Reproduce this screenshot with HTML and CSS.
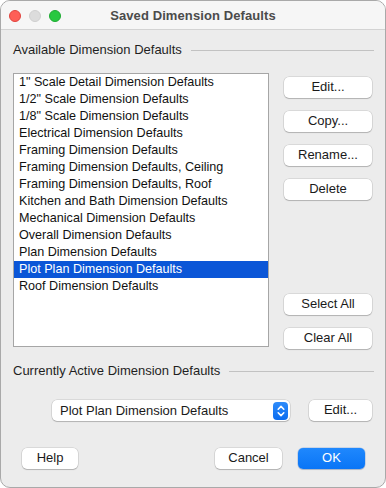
FILE: index.html
```html
<!DOCTYPE html>
<html>
<head>
<meta charset="utf-8">
<link rel="stylesheet" href="styles.css">
</head>
<body>
<div class="window">
  <div class="titlebar">
    <div class="lights">
      <span class="light red"></span>
      <span class="light gray"></span>
      <span class="light green"></span>
    </div>
    <div class="title">Saved Dimension Defaults</div>
    <div></div>
  </div>
  <div class="content">
    <div class="group-head first"><span>Available Dimension Defaults</span><div class="rule"></div></div>
    <div class="main">
      <div class="list">
        <div class="row">1" Scale Detail Dimension Defaults</div>
        <div class="row">1/2" Scale Dimension Defaults</div>
        <div class="row">1/8" Scale Dimension Defaults</div>
        <div class="row">Electrical Dimension Defaults</div>
        <div class="row">Framing Dimension Defaults</div>
        <div class="row">Framing Dimension Defaults, Ceiling</div>
        <div class="row">Framing Dimension Defaults, Roof</div>
        <div class="row">Kitchen and Bath Dimension Defaults</div>
        <div class="row">Mechanical Dimension Defaults</div>
        <div class="row">Overall Dimension Defaults</div>
        <div class="row">Plan Dimension Defaults</div>
        <div class="row selected">Plot Plan Dimension Defaults</div>
        <div class="row">Roof Dimension Defaults</div>
      </div>
      <div class="side">
        <div class="btn-group">
          <div class="btn">Edit...</div>
          <div class="btn">Copy...</div>
          <div class="btn">Rename...</div>
          <div class="btn">Delete</div>
        </div>
        <div class="btn-group bottom">
          <div class="btn">Select All</div>
          <div class="btn">Clear All</div>
        </div>
      </div>
    </div>
    <div class="group-head second"><span>Currently Active Dimension Defaults</span><div class="rule"></div></div>
    <div class="active-row">
      <div class="popup">
        <span>Plot Plan Dimension Defaults</span>
        <span class="stepper">
          <svg width="14" height="18" viewBox="0 0 14 18"><path d="M4.2 7.2 L7 4.4 L9.8 7.2 M4.2 10.8 L7 13.6 L9.8 10.8" fill="none" stroke="#fff" stroke-width="1.6" stroke-linecap="round" stroke-linejoin="round"/></svg>
        </span>
      </div>
      <div class="btn edit2">Edit...</div>
    </div>
    <div class="footer">
      <div class="btn help">Help</div>
      <div class="spacer"></div>
      <div class="btn cancel">Cancel</div>
      <div class="btn ok">OK</div>
    </div>
  </div>
</div>
</body>
</html>
```

FILE: styles.css
```css
* { box-sizing: border-box; }
html, body { margin: 0; padding: 0; background: #ffffff; }
body {
  font-family: "Liberation Sans", Arial, sans-serif;
  font-size: 13px;
  color: #1d1d1d;
}
.window {
  width: 386px;
  height: 488px;
  border: 1px solid #a9a9a9;
  border-radius: 10px;
  overflow: hidden;
  background: #ececec;
  display: flex;
  flex-direction: column;
}
.titlebar {
  height: 29px;
  flex: none;
  background: #f6f6f6;
  border-bottom: 1px solid #d3d3d3;
  display: grid;
  grid-template-columns: 1fr auto 1fr;
  align-items: center;
}
.lights {
  display: flex;
  gap: 8px;
  padding-left: 8px;
  padding-top: 1px;
}
.light {
  width: 12px;
  height: 12px;
  border-radius: 50%;
  display: block;
}
.red { background: #fe5f57; border: 0.5px solid #e0443e; }
.gray { background: #dcdcdc; border: 0.5px solid #cfcfcf; }
.green { background: #28c840; border: 0.5px solid #1eaa32; }
.title {
  font-weight: bold;
  font-size: 13px;
  color: #4b4b4b;
  letter-spacing: 0.1px;
  padding-top: 1px;
}
.content {
  flex: 1;
  display: flex;
  flex-direction: column;
  padding: 0 11px 0 12px;
}
.group-head {
  display: flex;
  align-items: center;
  gap: 9px;
  height: 16px;
  line-height: 16px;
  color: #1f1f1f;
}
.group-head.first { margin-top: 12px; }
.group-head.second { margin-top: 16px; }
.rule {
  flex: 1;
  height: 1px;
  background: #c2c2c2;
}
.main {
  display: flex;
  margin-top: 15px;
  height: 274px;
}
.list {
  width: 256px;
  height: 274px;
  background: #ffffff;
  border: 1px solid #a6a6a6;
}
.row {
  height: 17px;
  line-height: 17px;
  padding-left: 5px;
  font-size: 12.6px;
  color: #111;
  white-space: nowrap;
}
.row.selected {
  background: #0b56d7;
  color: #ffffff;
}
.side {
  margin-left: 15px;
  width: 88px;
  display: flex;
  flex-direction: column;
  justify-content: space-between;
  padding-top: 4px;
}
.btn-group {
  display: flex;
  flex-direction: column;
  gap: 13px;
}
.btn-group.bottom { margin-bottom: -2px; }
.btn {
  height: 21px;
  line-height: 20px;
  background: #ffffff;
  border-radius: 5px;
  text-align: center;
  color: #1a1a1a;
  box-shadow: 0 0 0 0.5px rgba(0,0,0,0.16), 0 1px 1px rgba(0,0,0,0.18);
  white-space: nowrap;
}
.active-row {
  display: flex;
  align-items: center;
  margin-top: 21px;
  padding-left: 39px;
  height: 21px;
}
.popup {
  width: 238px;
  height: 21px;
  background: #ffffff;
  border-radius: 5px;
  box-shadow: 0 0 0 0.5px rgba(0,0,0,0.16), 0 1px 1px rgba(0,0,0,0.18);
  display: flex;
  align-items: center;
  justify-content: space-between;
  padding: 0 2px 0 8px;
  color: #1a1a1a;
}
.stepper {
  width: 15px;
  height: 18px;
  border-radius: 4px;
  background: linear-gradient(#2f8cfa, #0a6cf0);
  display: flex;
  align-items: center;
  justify-content: center;
}
.stepper svg { display: block; }
.btn.edit2 {
  width: 63px;
  margin-left: 19px;
}
.footer {
  display: flex;
  margin-top: 27px;
  padding-left: 9px;
  padding-right: 9px;
}
.spacer { flex: 1; }
.btn.help { width: 56px; }
.btn.cancel { width: 67px; }
.btn.ok {
  width: 67px;
  margin-left: 16px;
  background: linear-gradient(#1f88fd, #0a75f6);
  color: #ffffff;
  box-shadow: 0 0 0 0.5px rgba(0,80,200,0.3), 0 1px 1px rgba(0,0,0,0.15);
}
```
